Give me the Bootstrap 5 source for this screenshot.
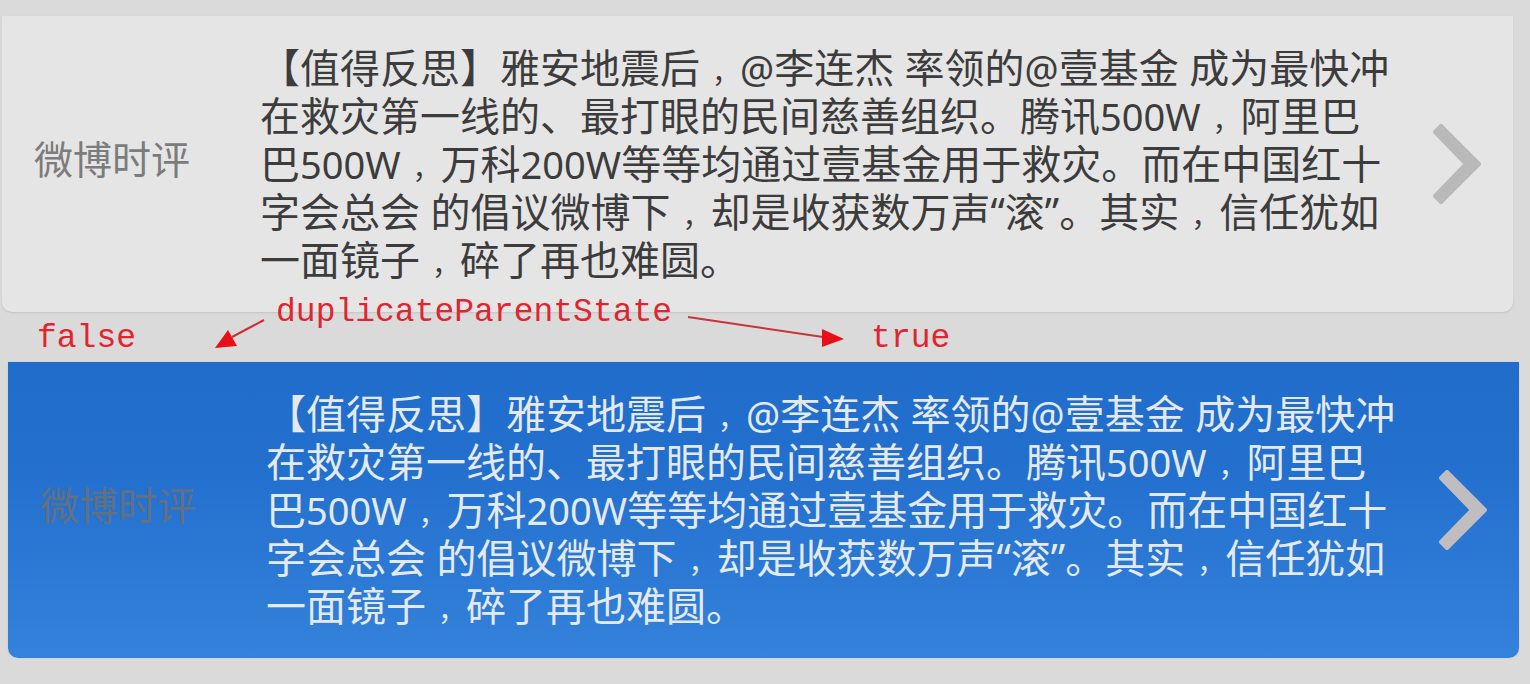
<!DOCTYPE html>
<html lang="zh-CN">
<head>
<meta charset="utf-8">
<meta name="viewport" content="width=device-width, initial-scale=1">
<title>duplicateParentState</title>
<link href="https://cdn.jsdelivr.net/npm/bootstrap@5.3.0/dist/css/bootstrap.min.css" rel="stylesheet">
<style>
  body { background: #dadada; font-family: "Noto Sans", "Noto Sans CJK SC", sans-serif; font-size: 40px; line-height: 48px; }
  main { padding: 16px 11px 27px 2px; }
  .item { border: 0; border-radius: 0 0 10px 10px; background: #e5e5e5; color: #3c3c3c; padding: 28px 32px; margin-right: 6px; box-shadow: 0 1px 2px #c4c4c4; }
  .item-pressed { background: linear-gradient(#216dcb, #236fce 35%, #3482db); color: #e4eaec; margin: 0 0 0 6px; box-shadow: 0 0 2px #b9cddd; }
  .item-label { flex: 0 0 226px; color: #7c7c7c; font-size: 39px; padding-bottom: 10px; }
  .item-pressed .item-label { color: #62707f; }
  .item-body { flex: 1 1 0; }
  .num { font-size: 38px; line-height: 1; }
  /* small full-width comma, set toward the middle of its cell */
  .comma { font-size: 28px; line-height: 1; padding-left: 12px; }
  .chevron { width: 48px; height: 80px; margin-left: 40px; color: #b9b9b9; }
  .item-pressed .chevron { color: #c0bdc0; }
  .notes { margin-top: -23px; height: 73px; z-index: 2; color: #df2630; font-family: "Liberation Mono", monospace; font-size: 33px; line-height: 48px; padding-left: 35px; }
  .note-low { padding-top: 26px; }
  .notes svg { overflow: visible; }
  .arrow-left { width: 52px; height: 34px; margin: 29px 10px 0 78px; }
  .arrow-right { width: 158px; height: 30px; margin: 26px 26px 0 15px; }
</style>
</head>
<body>
<main>
  <section class="card item flex-row align-items-center">
    <div class="item-label">微博时评</div>
    <div class="item-body">【值得反思】雅安地震后<span class="comma">，</span><span class="num">@</span>李连杰 率领的<span class="num">@</span>壹基金 成为最快冲在救灾第一线的、最打眼的民间慈善组织。腾讯<span class="num">500W</span><span class="comma">，</span>阿里巴巴<span class="num">500W</span><span class="comma">，</span>万科<span class="num">200W</span>等等均通过壹基金用于救灾。而在中国红十字会总会 的倡议微博下<span class="comma">，</span>却是收获数万声“滚”。其实<span class="comma">，</span>信任犹如一面镜子<span class="comma">，</span>碎了再也难圆。</div>
    <svg class="chevron flex-shrink-0" viewBox="0 0 48 80" aria-hidden="true"><path d="M2 8 8 2 46 40 8 78 2 72 33 40Z" fill="currentColor" stroke="currentColor" stroke-width="4" stroke-linejoin="round"/></svg>
  </section>

  <div class="notes d-flex align-items-start position-relative">
    <div class="note-low">false</div>
    <svg class="arrow-left flex-shrink-0" viewBox="0 0 52 34" aria-hidden="true"><path d="M50 2 18 19" stroke="#c83238" stroke-width="2"/><path d="M1 30 14 12 23 28Z" fill="#e81018"/></svg>
    <div>duplicateParentState</div>
    <svg class="arrow-right flex-shrink-0" viewBox="0 0 158 30" aria-hidden="true"><path d="M1 2 136 22" stroke="#c83238" stroke-width="2"/><path d="M135 14 157 24 135 32Z" fill="#e81018"/></svg>
    <div class="note-low">true</div>
  </div>

  <section class="card item item-pressed flex-row align-items-center">
    <div class="item-label">微博时评</div>
    <div class="item-body">【值得反思】雅安地震后<span class="comma">，</span><span class="num">@</span>李连杰 率领的<span class="num">@</span>壹基金 成为最快冲在救灾第一线的、最打眼的民间慈善组织。腾讯<span class="num">500W</span><span class="comma">，</span>阿里巴巴<span class="num">500W</span><span class="comma">，</span>万科<span class="num">200W</span>等等均通过壹基金用于救灾。而在中国红十字会总会 的倡议微博下<span class="comma">，</span>却是收获数万声“滚”。其实<span class="comma">，</span>信任犹如一面镜子<span class="comma">，</span>碎了再也难圆。</div>
    <svg class="chevron flex-shrink-0" viewBox="0 0 48 80" aria-hidden="true"><path d="M2 8 8 2 46 40 8 78 2 72 33 40Z" fill="currentColor" stroke="currentColor" stroke-width="4" stroke-linejoin="round"/></svg>
  </section>
</main>
<script src="https://cdn.jsdelivr.net/npm/bootstrap@5.3.0/dist/js/bootstrap.bundle.min.js"></script>
</body>
</html>
